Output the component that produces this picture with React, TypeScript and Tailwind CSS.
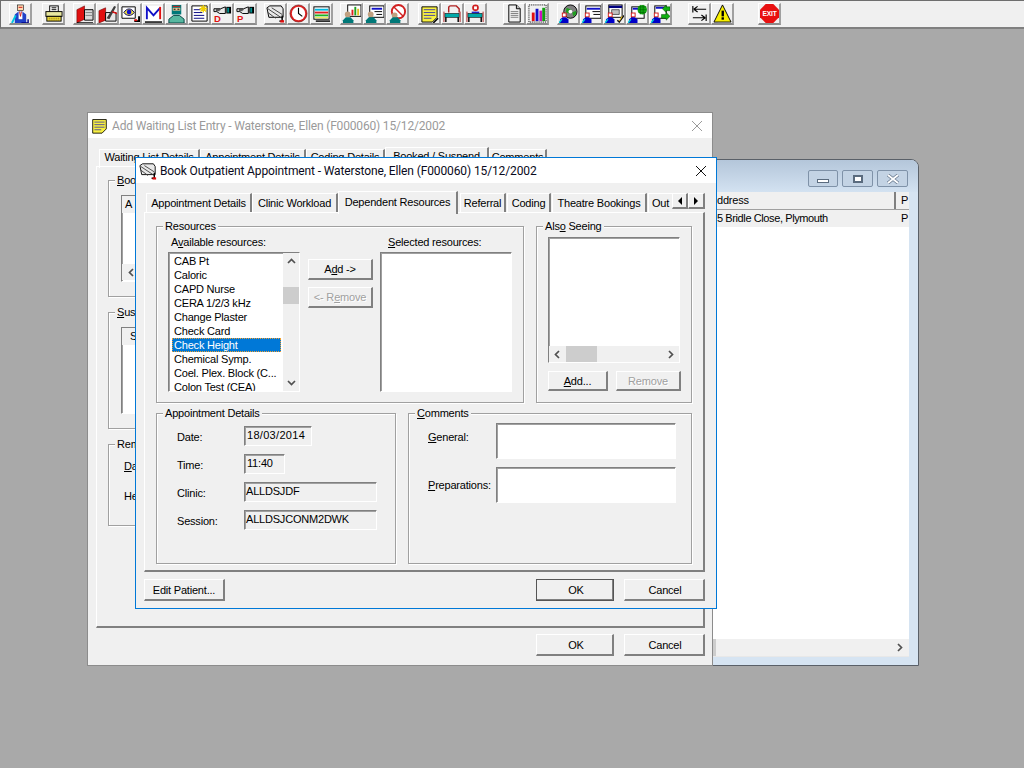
import type { ReactNode } from 'react';

const sunken = 'border border-t-[#808080] border-l-[#808080] border-r-white border-b-white shadow-[inset_1px_1px_0_#a0a0a0]';

function Person({ x = 0, y = 0, body = '#0000c8', hat = '#d01818' }: { x?: number; y?: number; body?: string; hat?: string }) {
  return (
    <g transform={`translate(${x} ${y})`}>
      <rect x="3" y="0" width="5" height="5" fill={hat} />
      <rect x="4" y="1" width="3" height="3" fill="#fff" />
      <path d="M1 11V7l3-2h3l3 2v4z" fill={body} />
      <path d="M0 11l3-4" stroke="#00c8d8" strokeWidth="1.5" />
    </g>
  );
}

function Bed({ top }: { top: ReactNode }) {
  return (
    <>
      {top}
      <rect x="2" y="10" width="15" height="4" fill="#00a8a8" stroke="#000" strokeWidth="0.6" />
      <path d="M3 14v5M16 14v5" stroke="#000" strokeWidth="1.5" />
      <path d="M1 8v11M18 8v11" stroke="#b02020" strokeWidth="1" />
    </>
  );
}

// toolbar artwork, one case per button
function ToolIcon({ name }: { name: string }) {
  const art: Record<string, ReactNode> = {
    doctor: (
      <>
        <rect x="7" y="1" width="6" height="6" fill="#ffd8b0" stroke="#000" strokeWidth="0.6" />
        <rect x="8" y="3" width="4" height="1" fill="#d01818" />
        <path d="M4 20V11l4-3h4l4 3v9z" fill="#2040c8" />
        <path d="M8 8h4v8H8z" fill="#fff" />
        <path d="M9 8l1 5 1-5" stroke="#d01818" fill="none" />
        <path d="M1 20l4-8" stroke="#00c8e0" strokeWidth="2" />
        <path d="M11 20h7v-4" stroke="#000080" strokeWidth="1.5" fill="none" />
      </>
    ),
    printer: (
      <>
        <rect x="6" y="2" width="9" height="7" fill="#fff" stroke="#000" />
        <path d="M8 4h5M8 6h5" stroke="#000" />
        <rect x="2" y="8" width="17" height="5" fill="#e8e8a0" stroke="#000" />
        <rect x="3" y="13" width="15" height="5" fill="#f0e040" stroke="#000" />
        <path d="M5 15h11M5 17h11" stroke="#806000" strokeDasharray="1 1" />
      </>
    ),
    book: (
      <>
        <path d="M2 6l8-4v14l-8 4z" fill="#e01010" stroke="#600" strokeWidth="0.6" />
        <path d="M10 6h9v11H10z" fill="#d8d8d8" stroke="#000" />
        <path d="M11 9h7M11 12h7" stroke="#808080" />
        <path d="M2 20h17" stroke="#000" strokeWidth="1.5" />
      </>
    ),
    bookPen: (
      <>
        <path d="M1 7l7-3v13l-7 3z" fill="#e01010" stroke="#600" strokeWidth="0.6" />
        <path d="M8 9h11v9H8z" fill="#e8e8e8" stroke="#000" />
        <path d="M9 15L17 2l2 1-7 13z" fill="#404040" />
        <path d="M15 8l5 2" stroke="#e01010" strokeWidth="1.5" />
      </>
    ),
    eye: (
      <>
        <path d="M1 3h14v12H1z" fill="#fff" stroke="#000" />
        <path d="M3 9c3-5 8-5 11 0-3 4-8 4-11 0z" fill="#f0e040" stroke="#000060" />
        <circle cx="8.500" cy="8.500" r="2.500" fill="#1010d0" />
        <path d="M14 18h5v-5" stroke="#000" strokeWidth="2" fill="none" />
        <rect x="14" y="16" width="3" height="2" fill="#e01010" />
      </>
    ),
    mail: (
      <>
        <rect x="1" y="2" width="18" height="16" fill="#fff" />
        <path d="M3 16V4l7 8 7-8" stroke="#1010c8" strokeWidth="2" fill="none" />
        <path d="M17 3v13" stroke="#e01010" strokeWidth="2" />
        <path d="M1 19h18" stroke="#000" strokeWidth="1.5" />
      </>
    ),
    nurse: (
      <>
        <rect x="5" y="1" width="10" height="10" fill="#007878" />
        <rect x="6" y="4" width="8" height="3" fill="#f0c090" />
        <rect x="7" y="5" width="2" height="1" fill="#000" />
        <rect x="11" y="5" width="2" height="1" fill="#000" />
        <rect x="6" y="2" width="8" height="1" fill="#d01818" />
        <path d="M2 20v-4l5-4h6l5 4v4z" fill="#58b8a0" stroke="#004040" />
      </>
    ),
    note: (
      <>
        <path d="M2 2h16v16H2z" fill="#fff" stroke="#000" />
        <path d="M4 6h7M4 9h9M4 12h11M4 15h11" stroke="#000080" />
        <path d="M14 1v8M10 5h8M11 2l6 6M17 2l-6 6" stroke="#f0d000" strokeWidth="1.4" />
      </>
    ),
    handD: (
      <>
        <path d="M1 5h7l5-2v7H7L4 8H1z" fill="#e8e8e8" stroke="#000" />
        <path d="M3 6h5M3 7h4" stroke="#000" strokeWidth="0.7" />
        <rect x="14" y="3" width="5" height="7" fill="#000" />
        <rect x="15" y="4" width="2" height="5" fill="#009090" />
        <text x="1" y="19" fontSize="10" fontWeight="700" fill="#e01010" fontFamily="Liberation Sans, sans-serif">D</text>
      </>
    ),
    handP: (
      <>
        <path d="M1 5h7l5-2v7H7L4 8H1z" fill="#e8e8e8" stroke="#000" />
        <path d="M3 6h5M3 7h4" stroke="#000" strokeWidth="0.7" />
        <rect x="14" y="3" width="5" height="7" fill="#000" />
        <rect x="15" y="4" width="2" height="5" fill="#009090" />
        <text x="1" y="19" fontSize="10" fontWeight="700" fill="#e01010" fontFamily="Liberation Sans, sans-serif">P</text>
      </>
    ),
    clock: (
      <>
        <circle cx="10" cy="10" r="9" fill="#e02020" stroke="#600" strokeWidth="0.6" />
        <circle cx="10" cy="10" r="7" fill="#fff" />
        <path d="M10 4v6l4 3" stroke="#000" fill="none" strokeWidth="1.2" />
      </>
    ),
    stripes: (
      <>
        <rect x="2" y="3" width="16" height="13" fill="#fff" stroke="#000" />
        <rect x="3" y="5" width="14" height="2" fill="#00b8e0" />
        <rect x="3" y="8" width="14" height="2" fill="#e02020" />
        <rect x="3" y="11" width="14" height="2" fill="#20b020" />
        <rect x="3" y="14" width="14" height="1" fill="#e8e020" />
        <path d="M4 18h15" stroke="#000" strokeWidth="1.5" />
      </>
    ),
    monitor: (
      <>
        <rect x="6" y="1" width="14" height="12" fill="#fff" stroke="#000" />
        <rect x="10" y="6" width="2" height="6" fill="#e02020" />
        <rect x="13" y="3" width="2" height="9" fill="#20a020" />
        <rect x="16" y="5" width="2" height="7" fill="#e0c020" />
        <circle cx="6" cy="11" r="3" fill="#c0a080" />
        <path d="M1 20v-3l3-3h5l3 3v3z" fill="#007878" />
      </>
    ),
    form: (
      <>
        <rect x="5" y="2" width="15" height="12" fill="#fff" stroke="#000" />
        <path d="M7 5h11" stroke="#1010c8" strokeWidth="2" />
        <path d="M10 8h8M12 11h6" stroke="#000" />
        <circle cx="6" cy="11" r="3" fill="#c0a080" />
        <path d="M1 20v-3l3-3h5l3 3v3z" fill="#007878" />
      </>
    ),
    noEntry: (
      <>
        <circle cx="11" cy="8" r="7" fill="#fff" stroke="#d02020" strokeWidth="2" />
        <path d="M6 3l10 10" stroke="#d02020" strokeWidth="1.500" />
        <circle cx="7" cy="12" r="3" fill="#c0a080" />
        <path d="M2 20v-3l3-3h5l3 3v3z" fill="#007878" />
      </>
    ),
    sticky: (
      <>
        <path d="M2 3h16v11l-5 5H2z" fill="#f8f040" stroke="#000" />
        <path d="M4 6h12M4 9h12M4 12h12M4 15h8" stroke="#4040a0" />
        <path d="M19 15l-5 5" stroke="#000" strokeWidth="1.5" />
      </>
    ),
    bed: <Bed top={<path d="M6 9V4a2 2 0 0 1 2-2h6l3 3v4" fill="none" stroke="#b02020" strokeWidth="1.5" />} />,
    bedPerson: (
      <Bed
        top={
          <>
            <circle cx="10" cy="4" r="3.500" fill="#d02020" />
            <rect x="8.500" y="2.500" width="3" height="3" fill="#fff" />
            <path d="M6 10V8h8v2" fill="#2020c8" />
          </>
        }
      />
    ),
    page: (
      <>
        <path d="M4 1h8l4 4v14H4z" fill="#f0f0f0" stroke="#000" />
        <path d="M12 1v4h4" fill="#c0c0c0" stroke="#000" />
        <path d="M6 8h8M6 10h8M6 12h8M6 14h8" stroke="#808080" />
      </>
    ),
    chart: (
      <>
        <rect x="1" y="1" width="18" height="18" fill="none" stroke="#000" strokeDasharray="1 1" />
        <rect x="4" y="9" width="3" height="9" fill="#e01010" />
        <rect x="8" y="5" width="3" height="13" fill="#1010c8" />
        <rect x="12" y="7" width="3" height="11" fill="#d010c0" />
        <rect x="15" y="4" width="3" height="14" fill="#10a010" />
      </>
    ),
    globe: (
      <>
        <circle cx="12" cy="8" r="7" fill="#808080" stroke="#000" />
        <path d="M8 4l5 2-2 4-4-1zM14 9l4-2 0 4-3 2z" fill="#20a020" />
        <circle cx="12" cy="8" r="2" fill="#fff" />
        <Person x={0} y={9} />
      </>
    ),
    formPerson: (
      <>
        <rect x="4" y="2" width="16" height="13" fill="#fff" stroke="#000" />
        <path d="M5 5h14" stroke="#1010c8" strokeWidth="2" />
        <path d="M11 8h8M12 11h7" stroke="#000" />
        <Person x={0} y={9} />
      </>
    ),
    calPerson: (
      <>
        <rect x="4" y="1" width="14" height="13" fill="#fff" stroke="#000" />
        <path d="M4 3h14" stroke="#000080" strokeWidth="2.500" />
        <path d="M7 6h8v5H7z" fill="#c0c0c0" stroke="#000" strokeWidth="0.6" />
        <path d="M13 17l2 2 5-7" stroke="#101010" strokeWidth="1.500" fill="none" />
        <path d="M15 18l3-5" stroke="#f0c000" />
        <Person x={0} y={9} />
      </>
    ),
    greenPerson: (
      <>
        <rect x="4" y="3" width="13" height="12" fill="#fff" stroke="#000" />
        <path d="M5 5h11" stroke="#1010c8" strokeWidth="2" />
        <circle cx="15" cy="6" r="5" fill="#10a810" />
        <path d="M11 3h8M11 6h8M11 9h8M13 1v10M16 1v10" stroke="#006000" strokeWidth="0.6" />
        <Person x={0} y={9} />
      </>
    ),
    greenArrows: (
      <>
        <rect x="4" y="2" width="12" height="13" fill="#fff" stroke="#000" />
        <path d="M5 4h10" stroke="#1010c8" strokeWidth="2" />
        <path d="M12 5l4-4v2h4v4h-4v2z" fill="#10b010" stroke="#004000" strokeWidth="0.5" />
        <path d="M20 13l-4 4v-2h-5v-4h5V9z" fill="#10b010" stroke="#004000" strokeWidth="0.5" />
        <Person x={0} y={9} />
      </>
    ),
    swap: <path d="M3 2v7M4 5.500h13M4 5.500l4-3M4 5.500l4 3M17 11v7M3 14.500h13M16 14.500l-4-3M16 14.500l-4 3" stroke="#000" fill="none" strokeWidth="1.200" />,
    warning: (
      <>
        <path d="M10 1l9 18H1z" fill="#f8f000" stroke="#000" />
        <rect x="9" y="7" width="2.500" height="6" fill="#000" />
        <rect x="9" y="14" width="2.500" height="2.500" fill="#000" />
        <path d="M19 20H5" stroke="#808080" strokeWidth="1.500" />
      </>
    ),
    exit: (
      <>
        <path d="M6 0h8l6 6v8l-6 6H6l-6-6V6z" fill="#e81010" />
        <text x="10" y="12.500" textAnchor="middle" fontSize="7" fontWeight="700" fill="#fff" fontFamily="Liberation Sans, sans-serif">EXIT</text>
      </>
    ),
    penDoc: <PenDoc />,
  };
  return (
    <svg viewBox="0 0 20 20" className="w-[19px] h-[19px]">
      {art[name]}
    </svg>
  );
}

function PenDoc() {
  return (
    <>
      <path d="M1 4l3-2h12l2 3v9H3z" fill="#e8e8e8" stroke="#000" />
      <path d="M2 5l15 10M6 4l11 7M2 9l8 6" stroke="#404040" />
      <path d="M17 12v6h-3" stroke="#000" strokeWidth="1.500" fill="none" />
      <rect x="15" y="17" width="4" height="2.500" fill="#e01010" />
    </>
  );
}

function ToolButton({ name }: { name: string }) {
  return (
    <button className="w-[23px] h-[22px] flex items-center justify-center bg-[#f0f0f0] border-t border-l border-t-white border-l-white border-r-2 border-b-2 border-r-[#a0a0a0] border-b-[#8c8c8c]">
      <ToolIcon name={name} />
    </button>
  );
}

const toolGroups: { gap: string; names: string[] }[] = [
  { gap: 'ml-[8px]', names: ['doctor'] },
  { gap: 'ml-[10px]', names: ['printer'] },
  { gap: 'ml-[8px]', names: ['book', 'bookPen', 'eye', 'mail', 'nurse', 'note', 'handD', 'handP'] },
  { gap: 'ml-[7px]', names: ['penDoc', 'clock', 'stripes'] },
  { gap: 'ml-[7px]', names: ['monitor', 'form', 'noEntry'] },
  { gap: 'ml-[9px]', names: ['sticky', 'bed', 'bedPerson'] },
  { gap: 'ml-[16px]', names: ['page', 'chart'] },
  { gap: 'ml-[8px]', names: ['globe', 'formPerson', 'calPerson', 'greenPerson', 'greenArrows'] },
  { gap: 'ml-[16px]', names: ['swap', 'warning'] },
  { gap: 'ml-[24px]', names: ['exit'] },
];

function Toolbar() {
  return (
    <div className="h-[29px] bg-[#f0f0f0] border-t border-l border-b-2 border-t-[#6e6e6e] border-l-[#6e6e6e] border-b-[#808080] flex items-center">
      {toolGroups.map((g) => (
        <div key={g.names[0]} className={`flex ${g.gap}`}>
          {g.names.map((n) => (
            <ToolButton key={n} name={n} />
          ))}
        </div>
      ))}
    </div>
  );
}

function GroupBox({ label, className, children }: { label?: ReactNode; className?: string; children?: ReactNode }) {
  return (
    <div className={`relative border border-[#a0a0a0] shadow-[inset_1px_1px_0_#fff,1px_1px_0_#fff] ${className ?? ''}`}>
      {label && <span className="absolute -top-[8px] left-[6px] px-[2px] bg-[#f0f0f0] leading-[14px]">{label}</span>}
      {children}
    </div>
  );
}

function Btn({ children, className, disabled, primary }: { children: ReactNode; className?: string; disabled?: boolean; primary?: boolean }) {
  return (
    <button
      className={`h-[22px] pt-[1px] flex items-center justify-center bg-[#f0f0f0] border-t border-l border-t-white border-l-white border-r-2 border-b-2 border-r-[#808080] border-b-[#808080] ${primary ? 'outline outline-1 -outline-offset-1 outline-[#555]' : ''} ${disabled ? 'text-[#a0a0a0] [text-shadow:1px_1px_0_#fff]' : ''} ${className ?? ''}`}
    >
      {children}
    </button>
  );
}

function TabBtn({ children, w, active, last, tight }: { children: ReactNode; w: string; active?: boolean; last?: boolean; tight?: boolean }) {
  return (
    <div
      className={`${w} shrink-0 flex justify-center overflow-hidden border-t border-l border-t-white border-l-white ${tight ? 'leading-[13px]' : ''} ${last ? '' : 'border-r-2 border-r-[#808080]'} ${
        active ? 'h-[23px] -mt-[2px] pt-[2px] relative z-10 bg-[#f0f0f0] items-start' : 'h-[19px] pt-[1px] items-start'
      }`}
    >
      {children}
    </div>
  );
}

function Chevron({ dir, className }: { dir: 'up' | 'down' | 'left' | 'right'; className?: string }) {
  const d = { up: 'M1 6l3.500-3.500L8 6', down: 'M1 3l3.500 3.500L8 3', left: 'M6 1L2.500 4.500 6 8', right: 'M3 1l3.500 3.500L3 8' }[dir];
  return (
    <svg viewBox="0 0 9 9" className={`w-[9px] h-[9px] ${className ?? ''}`}>
      <path d={d} fill="none" stroke="#505050" strokeWidth="1.700" />
    </svg>
  );
}

const resources = ['CAB Pt', 'Caloric', 'CAPD Nurse', 'CERA 1/2/3 kHz', 'Change Plaster', 'Check Card', 'Check Height', 'Chemical Symp.', 'Coel. Plex. Block (C...', 'Colon Test (CEA)'];

function ResourceList() {
  return (
    <div className={`h-[140px] w-[132px] flex bg-white overflow-hidden ${sunken}`}>
      <div className="flex-1 pl-[3px] pt-[1px] overflow-hidden">
        {resources.map((r) => (
          <div
            key={r}
            className={`h-[14px] leading-[14px] pl-[2px] w-[109px] whitespace-nowrap ${
              r === 'Check Height' ? 'bg-[#0078d7] text-white outline-1 -outline-offset-1 outline-dotted outline-[#f0a030]' : ''
            }`}
          >
            {r}
          </div>
        ))}
      </div>
      <div className="w-[16px] shrink-0 bg-[#f0f0f0] flex flex-col items-center">
        <div className="h-[17px] flex items-center"><Chevron dir="up" /></div>
        <div className="w-full h-[17px] mt-[17px] bg-[#cdcdcd]" />
        <div className="flex-1" />
        <div className="h-[17px] flex items-center"><Chevron dir="down" /></div>
      </div>
    </div>
  );
}

function ReadField({ value, w, pad = 'pl-[2px]' }: { value: string; w: string; pad?: string }) {
  return <div className={`${w} h-[20px] leading-[17px] ${pad} ${sunken}`}>{value}</div>;
}

function BookDialog() {
  return (
    <div className="absolute left-[135px] top-[157px] w-[582px] h-[452px] bg-[#f0f0f0] border border-[#0078d7] flex flex-col z-30">
      <div className="h-[25px] shrink-0 bg-white flex items-center pl-[3px] pr-[8px] font-['Roboto',sans-serif] tracking-[-0.12px] text-[12px]">
        <svg viewBox="0 0 20 20" className="w-[18px] h-[18px] mr-[3px]"><PenDoc /></svg>
        <span className="flex-1 text-[#0a0a20]">Book Outpatient Appointment - Waterstone, Ellen (F000060) 15/12/2002</span>
        <svg viewBox="0 0 12 12" className="w-[12px] h-[12px] mr-[1px]"><path d="M1 1l10 10M11 1L1 11" stroke="#111" strokeWidth="1" /></svg>
      </div>

      <div className="flex mt-[10px] ml-[10px] w-[560px] h-[19px] relative">
        <TabBtn w="w-[106px]">Appointment Details</TabBtn>
        <TabBtn w="w-[86px]">Clinic Workload</TabBtn>
        <TabBtn w="w-[120px]" active>Dependent Resources</TabBtn>
        <div className="w-[2px]" />
        <TabBtn w="w-[46px]">Referral</TabBtn>
        <div className="w-[1px]" />
        <TabBtn w="w-[44px]">Coding</TabBtn>
        <div className="w-[1px]" />
        <TabBtn w="w-[95px]">Theatre Bookings</TabBtn>
        <div className="w-[1px]" />
        <TabBtn w="w-[24px]" last>Out</TabBtn>
        <div className="flex">
          <div className="w-[16px] h-[16px] flex items-center justify-center border-t border-l border-white border-r-2 border-b-2 border-r-[#808080] border-b-[#808080]"><span className="border-y-[4px] border-y-transparent border-r-[4px] border-r-black" /></div>
          <div className="w-[17px] h-[16px] flex items-center justify-center border-t border-l border-white border-r-2 border-b-2 border-r-[#808080] border-b-[#808080]"><span className="border-y-[4px] border-y-transparent border-l-[4px] border-l-black" /></div>
        </div>
      </div>

      <div className="ml-[8px] w-[561px] h-[360px] border-t border-l border-t-white border-l-white border-r-2 border-b-2 border-r-[#808080] border-b-[#808080] pt-[13px] pl-[11px]">
        <div className="flex gap-[12px]">
          <GroupBox label="Resources" className="w-[368px] h-[177px] pl-[11px] pt-[8px]">
            <div className="flex">
              <div>
                <div className="h-[17px] leading-[14px] pl-[3px]">A<u>v</u>ailable resources:</div>
                <ResourceList />
              </div>
              <div className="ml-[8px] mt-[24px] flex flex-col gap-[7px]">
                <Btn className="w-[65px] !h-[21px]">A<u>d</u>d -&gt;</Btn>
                <Btn className="w-[65px] !h-[21px]" disabled>&lt;- R<u>e</u>move</Btn>
              </div>
              <div className="ml-[7px]">
                <div className="h-[17px] leading-[14px] pl-[8px]"><u>S</u>elected resources:</div>
                <div className={`w-[132px] h-[140px] bg-white ${sunken}`} />
              </div>
            </div>
          </GroupBox>
          <GroupBox label={<>Als<u>o</u> Seeing</>} className="w-[156px] h-[177px] pl-[11px] pt-[10px]">
            <div className={`w-[132px] h-[126px] bg-white flex flex-col justify-end ${sunken}`}>
              <div className="h-[16px] bg-[#f0f0f0] flex items-center">
                <div className="w-[17px] flex justify-center"><Chevron dir="left" /></div>
                <div className="w-[31px] h-full bg-[#cdcdcd]" />
                <div className="flex-1" />
                <div className="w-[17px] flex justify-center"><Chevron dir="right" /></div>
              </div>
            </div>
            <div className="flex gap-[8px] mt-[8px]">
              <Btn className="w-[60px] !h-[20px]"><u>A</u>dd...</Btn>
              <Btn className="w-[65px] !h-[20px]" disabled>Remove</Btn>
            </div>
          </GroupBox>
        </div>

        <div className="flex gap-[12px] mt-[10px]">
          <GroupBox label="Appointment Details" className="w-[240px] h-[151px] pl-[20px] pt-[12px]">
            <div className="grid grid-cols-[67px_1fr] gap-y-[8px] items-center">
              <span className="pt-[2px]">Date:</span>
              <ReadField value="18/03/2014" w="w-[68px] tracking-[0.3px]" />
              <span className="pt-[2px]">Time:</span>
              <ReadField value="11:40" w="w-[41px]" />
              <span className="pt-[2px]">Clinic:</span>
              <ReadField value="ALLDSJDF" w="w-[133px]" pad="pl-[1px]" />
              <span className="pt-[2px]">Session:</span>
              <ReadField value="ALLDSJCONM2DWK" w="w-[133px]" pad="pl-[1px]" />
            </div>
          </GroupBox>
          <GroupBox label={<><u>C</u>omments</>} className="w-[284px] h-[151px] pl-[19px] pt-[9px]">
            <div className="grid grid-cols-[68px_180px] gap-y-[8px]">
              <span className="pt-[6px]"><u>G</u>eneral:</span>
              <div className={`h-[36px] bg-white ${sunken}`} />
              <span className="pt-[10px]"><u>P</u>reparations:</span>
              <div className={`h-[36px] bg-white ${sunken}`} />
            </div>
          </GroupBox>
        </div>
      </div>

      <div className="flex mt-[7px] ml-[8px] w-[561px]">
        <Btn className="w-[81px]">Edit Patient...</Btn>
        <div className="flex-1" />
        <Btn className="w-[78px] pl-[3px]" primary>OK</Btn>
        <Btn className="w-[81px] ml-[10px] pl-[2px]">Cancel</Btn>
      </div>
    </div>
  );
}

function WaitingListWindow() {
  return (
    <div className="absolute left-[87px] top-[112px] w-[626px] h-[554px] bg-[#f0f0f0] border border-[#8c8c8c] flex flex-col z-20">
      <div className="h-[25px] shrink-0 bg-white flex items-center pl-[3px] pr-[9px] font-['Roboto',sans-serif] tracking-[-0.17px] text-[12px] text-[#9a9a9a]">
        <svg viewBox="0 0 20 20" className="w-[17px] h-[17px] mr-[4px]">
          <path d="M2 3h16v11l-5 5H2z" fill="#f8f040" stroke="#000" />
          <path d="M4 6h12M4 9h12M4 12h12M4 15h8" stroke="#4040a0" />
        </svg>
        <span className="flex-1">Add Waiting List Entry - Waterstone, Ellen (F000060) 15/12/2002</span>
        <svg viewBox="0 0 12 12" className="w-[12px] h-[12px]"><path d="M1 1l10 10M11 1L1 11" stroke="#9a9a9a" strokeWidth="1" /></svg>
      </div>
      <div className="flex ml-[11px] mt-[11px] h-[17px]">
        <TabBtn w="w-[101px]" tight>Waiting List Details</TabBtn>
        <TabBtn w="w-[106px]" tight>Appointment Details</TabBtn>
        <TabBtn w="w-[79px]" tight>Coding Details</TabBtn>
        <TabBtn w="w-[104px]" tight active>Booked / Suspend</TabBtn>
        <TabBtn w="w-[58px]" tight>Comments</TabBtn>
      </div>
      <div className="ml-[8px] w-[609px] h-[462px] border-t border-l border-t-white border-l-white border-r-2 border-b-2 border-r-[#808080] border-b-[#808080] pl-[11px] pt-[13px]">
        <GroupBox label={<><u>B</u>ooked</>} className="w-[500px] h-[117px] pl-[12px] pt-[14px]">
          <div className={`w-[300px] h-[87px] bg-white ${sunken}`}>
            <div className="h-[17px] pl-[3px] bg-[#f0f0f0]">A</div>
            <div className="h-[51px]" />
            <div className="h-[16px] pl-[5px] bg-[#f0f0f0] flex items-center"><Chevron dir="left" /></div>
          </div>
        </GroupBox>
        <GroupBox label={<><u>S</u>uspended</>} className="w-[500px] h-[117px] mt-[15px] pl-[12px] pt-[14px]">
          <div className={`w-[300px] h-[87px] bg-white ${sunken}`}>
            <div className="h-[17px] pl-[8px] bg-[#f0f0f0]">S</div>
          </div>
        </GroupBox>
        <GroupBox label="Reminders" className="w-[500px] h-[82px] mt-[15px] pl-[15px] pt-[13px]">
          <div><u>D</u>ate</div>
          <div className="mt-[13px]">Held</div>
        </GroupBox>
      </div>
      <div className="flex justify-end gap-[10px] mt-[6px] ml-[8px] w-[609px]">
        <Btn className="w-[78px] pl-[3px]">OK</Btn>
        <Btn className="w-[81px] pl-[2px]">Cancel</Btn>
      </div>
    </div>
  );
}

function PatientListWindow() {
  return (
    <div className="absolute left-[700px] top-[159px] w-[219px] h-[507px] rounded-tr-[8px] border border-[#5a6068] bg-[#d6e4f2] flex flex-col z-10">
      <div className="h-[32px] shrink-0 rounded-tr-[7px] bg-gradient-to-b from-[#b4c6da] to-[#d3e2f1] flex justify-end items-start gap-[4px] pt-[10px] pr-[10px]">
        <div className="w-[30px] h-[17px] rounded-[2px] border border-[#7f92a8] bg-[#c3d3e4] flex items-center justify-center"><span className="w-[12px] h-[4px] mt-[4px] bg-white border border-[#5a6b7e]" /></div>
        <div className="w-[31px] h-[17px] rounded-[2px] border border-[#7f92a8] bg-[#c3d3e4] flex items-center justify-center"><span className="w-[10px] h-[8px] bg-white border-2 border-[#5a6b7e]" /></div>
        <div className="w-[31px] h-[17px] rounded-[2px] border border-[#7f92a8] bg-[#c3d3e4] flex items-center justify-center">
          <svg viewBox="0 0 14 10" className="w-[14px] h-[10px]"><path d="M2 1l10 8M12 1L2 9" stroke="#6a7b90" strokeWidth="3.400" /><path d="M2 1l10 8M12 1L2 9" stroke="#fff" strokeWidth="1.800" /></svg>
        </div>
      </div>
      <div className="ml-[12px] w-[196px] h-[465px] bg-white border-b border-b-[#e8e8e8] flex flex-col">
        <div className="h-[18px] flex bg-[#f0f0f0] border-b border-b-[#a0a0a0]">
          <div className="w-[183px] pl-[4px] border-r-2 border-r-[#808080] leading-[17px]">ddress</div>
          <div className="pl-[5px] leading-[17px]">P</div>
        </div>
        <div className="h-[17px] flex bg-[#f0f0f0] leading-[16px]">
          <div className="w-[183px] pl-[4px] tracking-[-0.4px]">5 Bridle Close, Plymouth</div>
          <div className="pl-[5px]">P</div>
        </div>
        <div className="flex-1" />
        <div className="h-[17px] bg-[#f0f0f0] flex items-center justify-between pr-[5px]">
          <span className="w-[3px] h-full bg-[#cdcdcd]" />
          <Chevron dir="right" />
        </div>
      </div>
    </div>
  );
}

export default function App() {
  return (
    <div className="w-[1024px] h-[768px] relative overflow-hidden bg-[#a9a9a9] text-black text-[11px] tracking-[-0.2px] font-['Liberation_Sans',Arial,sans-serif]">
      <Toolbar />
      <PatientListWindow />
      <WaitingListWindow />
      <BookDialog />
    </div>
  );
}
